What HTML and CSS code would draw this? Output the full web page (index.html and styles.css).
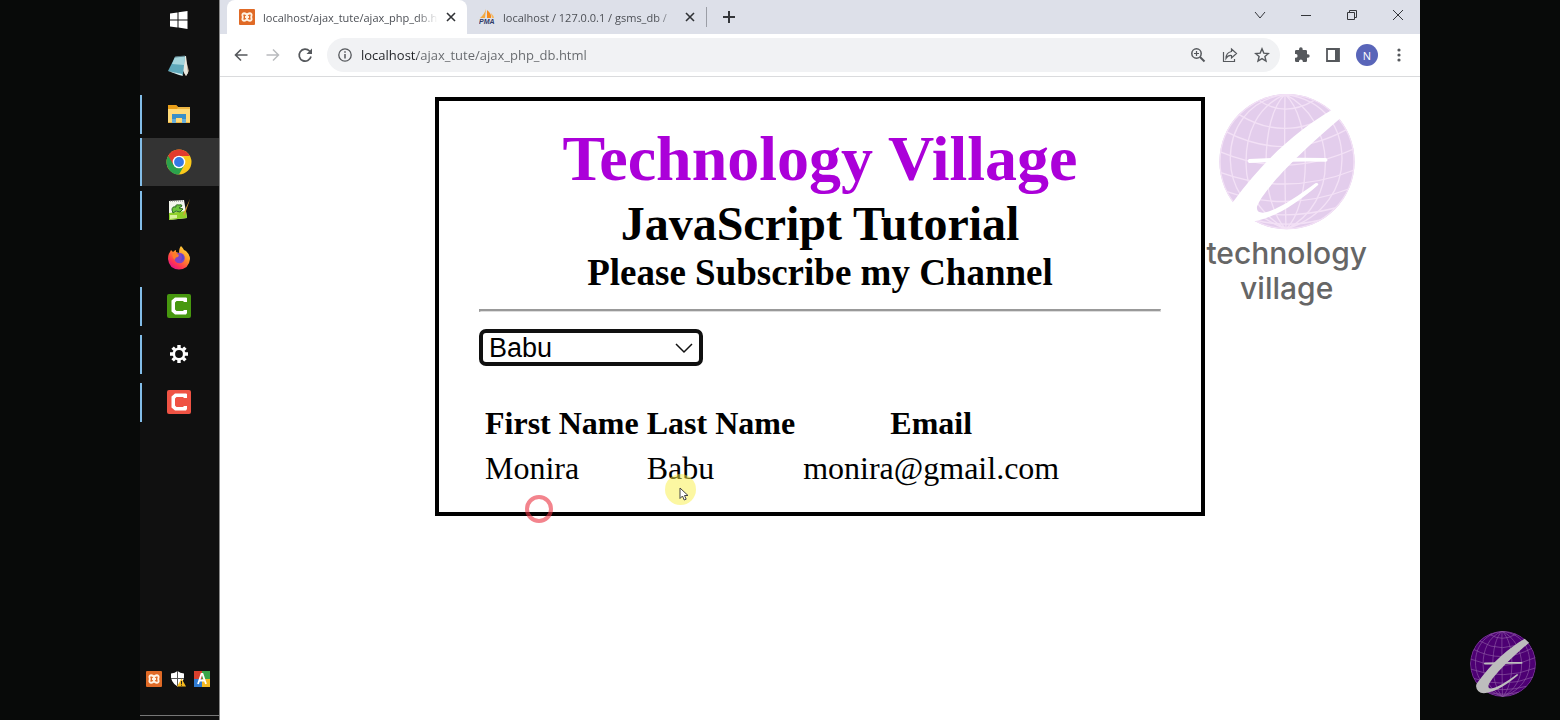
FILE: index.html
```html
<!DOCTYPE html>
<html lang="en">
<head>
<meta charset="utf-8">
<title>Technology Village</title>
<link rel="stylesheet" href="styles.css">
</head>
<body>
<svg class="defs" aria-hidden="true">
  <symbol id="globe" viewBox="60 36 420 420">
    <clipPath id="disc"><circle cx="270" cy="245" r="203"/></clipPath>
    <circle class="globe-fill" cx="270" cy="245" r="203"/>
    <g class="globe-lines" clip-path="url(#disc)">
      <circle cx="270" cy="245" r="201"/>
      <path d="M264 43C262 150 264 330 267 448M264 43C225 80 208 160 207 245S230 410 267 448M264 43C305 80 325 160 325 245S305 410 267 448M264 43C180 80 146 160 147 250S190 400 267 448M264 43C340 80 383 160 385 245S345 410 267 448M264 43C150 60 98 150 100 240S150 400 267 448M264 43C390 60 434 150 435 235S385 410 267 448"/>
      <path d="M188 63Q265 112 350 62M125 103Q265 190 412 98M87 155Q265 248 450 148M68 215Q270 300 474 205M72 278Q270 350 472 270M90 335Q270 398 455 327M130 390Q270 422 414 384M175 420Q270 445 370 420"/>
    </g>
    <path class="globe-mark" d="M404 90C310 145 205 232 108 366Q96 390 118 414Q136 432 172 424C235 412 300 370 364 314Q364 307 355 310C300 350 235 396 196 398Q178 398 180 380C195 333 310 215 431 114Z"/>
    <path class="globe-mark" d="M156 237Q270 231 387 234Q396 240 387 245Q270 243 156 249Q148 243 156 237Z"/>
  </symbol>
  <symbol id="xampp" viewBox="0 0 16 16">
    <rect width="16" height="16" rx="1" fill="#e06a26"/>
    <path d="M5 4.300Q7.300 4.300 8 6.500Q8.700 4.300 11 4.300Q13.200 4.500 12.400 7Q12 8 12.400 9Q13.200 11.500 11 11.700Q8.700 11.700 8 9.500Q7.300 11.700 5 11.700Q2.800 11.500 3.600 9Q4 8 3.600 7Q2.800 4.500 5 4.300ZM6 8h4" fill="none" stroke="#fff3e4" stroke-width="1.900"/>
  </symbol>
  <symbol id="close" viewBox="0 0 10 10"><path d="M1 1l8 8M9 1L1 9" fill="none" stroke="currentColor" stroke-width="1.600"/></symbol>
</svg>

<div class="stage">
  <nav class="taskbar" aria-label="Taskbar">
    <button class="task start" aria-label="Start"><svg width="18" height="18" viewBox="0 0 18 18" fill="#fff"><path d="M0 2.500L7.500 1.500V8.500H0ZM8.500 1.300L17.500 0V8.500H8.500ZM0 9.500h7.500v7L0 15.500ZM8.500 9.500h9V18L8.500 16.600Z"/></svg></button>
    <button class="task" aria-label="Notepad"><svg width="24" height="24" viewBox="0 0 24 24"><path d="M18 2l4 15-3 5-2-3Z" fill="#a9927a"/><path d="M8 3l11-1 2 17-2 3Z" fill="#e8e8df"/><path d="M8 3l10-1-2 19-15-4Z" fill="#5fa9bb"/><path d="M8 3l10-1-1 9-12-1Z" fill="#a5d5dc"/><path d="M1 17l14 3 1 2-4-1Z" fill="#d3eef0"/><path d="M8 3l10-1" stroke="#52727b"/></svg></button>
    <button class="task running" aria-label="File Explorer"><svg width="24" height="20" viewBox="0 0 24 20"><path d="M1 1h8l2 2h12v16H1Z" fill="#eeb643"/><path d="M1 5h22v13H1Z" fill="#ffda78"/><path d="M1 1h8l2 2-1 2H1Z" fill="#e99e18"/><path d="M5 10h14v9h-4v-5H9v5H5Z" fill="#398fc8"/><path d="M5 15h4v4H5ZM15 15h4v4h-4Z" fill="#66aeda"/></svg></button>
    <button class="task running active" aria-label="Chrome"><svg width="26" height="26" viewBox="0 0 26 26"><circle cx="13" cy="13" r="12.500" fill="#fbc91b"/><path d="M13 13L2.200 6.700A12.500 12.500 0 0 0 13 25.500L18.400 16Z" fill="#2ba24c"/><path d="M2.200 6.700A12.500 12.500 0 0 1 23.900 7H13L7.600 16Z" fill="#e33b2e"/><circle cx="13" cy="13" r="6.300" fill="#fff"/><circle cx="13" cy="13" r="4.900" fill="#3478e5"/></svg></button>
    <button class="task running" aria-label="Notepad++"><svg width="24" height="24" viewBox="0 0 24 24"><path d="M2 3l15-1 3 18-18 2Z" fill="#f4f7ee"/><path d="M2 15l17-2 1 7-18 2Z" fill="#8ed02a"/><path d="M3 17h7v3l-7 1Z" fill="#d8f29a"/><path d="M5 12q0-4 4-3q-1-3 3-2q3-1 3 1l-3 2 4 1-3 3-4-1-3 2Z" fill="#6cc43c" stroke="#2c6a22"/><path d="M3 3h13" stroke="#777" stroke-dasharray="1 1"/><path d="M23 1l-5 15-2 2 1-4Z" fill="#d9a233"/></svg></button>
    <button class="task" aria-label="Firefox"><svg width="24" height="24" viewBox="0 0 24 24"><defs><linearGradient id="fox" x1="1" y1="0" x2="0.300" y2="1"><stop offset="0" stop-color="#fff14a"/><stop offset="0.450" stop-color="#ff9425"/><stop offset="0.800" stop-color="#ff3750"/><stop offset="1" stop-color="#e31587"/></linearGradient></defs><path d="M14 0q2 2 3 4l2 1q4 4 4 8q-1 10-11 10.500Q2 23 1 13q0-5 2-7l1-2 2 2q2-2 3-2l0 2 3 1q0-5 2-7Z" fill="url(#fox)"/><circle cx="12.500" cy="12" r="5.300" fill="#8144c5"/><path d="M6 7q4 0 6 2l-1 2q-3 0-3 3Q4 11 6 7Z" fill="#ff7b28"/><path d="M14 8q3 1 3 5l-3 2 1-4Z" fill="#5948c9"/></svg></button>
    <button class="task running" aria-label="Camtasia"><svg width="24" height="24" viewBox="0 0 24 24"><rect width="24" height="24" rx="2" fill="#47980f"/><path d="M20 4v4h-3l-1-1H9.500L8 8.500v7L9.500 17H16l1-1h3v3l-1 1.500H8L4.500 17.500V6.500L8 3.500h11Z" fill="#fff"/></svg></button>
    <button class="task running" aria-label="Settings"><svg width="20" height="20" viewBox="0 0 20 20" fill="none" stroke="#fff"><circle cx="10" cy="10" r="5.200" stroke-width="2.600"/><path d="M10 4V1M10 16v3M4 10H1M16 10h3M5.800 5.800L3.600 3.600M14.200 14.200l2.200 2.200M14.200 5.800l2.200-2.200M5.800 14.200l-2.200 2.200" stroke-width="3.400"/></svg></button>
    <button class="task running" aria-label="Camtasia Recorder"><svg width="24" height="24" viewBox="0 0 24 24"><rect width="24" height="24" rx="2" fill="#ef5344"/><path d="M20 4v4h-3l-1-1H9.500L8 8.500v7L9.500 17H16l1-1h3v3l-1 1.500H8L4.500 17.500V6.500L8 3.500h11Z" fill="#fff"/></svg></button>
    <div class="tray">
      <button class="tray-icon" aria-label="XAMPP"><svg width="16" height="16"><use href="#xampp"/></svg></button>
      <button class="tray-icon" aria-label="Security"><svg width="16" height="16" viewBox="0 0 16 16"><path d="M7.500 0Q10 2 14 2.500Q15 11 7.500 15.500Q0 11 1 2.500Q5 2 7.500 0Z" fill="#fff"/><path d="M7.500 0v15M1 7.500h13" stroke="#555"/><path d="M11.500 7.500L16 15.500H7Z" fill="#f5b91d"/><path d="M11.500 10v3M11.500 13.700v1" stroke="#222"/></svg></button>
      <button class="tray-icon" aria-label="Avro Keyboard"><svg width="16" height="16" viewBox="0 0 16 16"><path d="M0 0h8v8H0Z" fill="#d9402e"/><path d="M8 0h8v8H8Z" fill="#39a548"/><path d="M0 8h8v8H0Z" fill="#2f7bd2"/><path d="M8 8h8v8H8Z" fill="#f3b922"/><path d="M4 13L7.500 3h1L12 13M5.500 9.500h5" fill="none" stroke="#fff" stroke-width="1.800"/></svg></button>
    </div>
  </nav>

  <main class="browser">
    <header class="tabstrip">
      <div class="tab current">
        <svg class="favicon" width="16" height="16"><use href="#xampp"/></svg>
        <span class="tab-title">localhost/ajax_tute/ajax_php_db.h</span>
        <button class="icon" aria-label="Close tab"><svg width="10" height="10"><use href="#close"/></svg></button>
      </div>
      <div class="tab">
        <svg class="favicon" width="16" height="16" viewBox="0 0 16 16"><path d="M7 0L6 9H1Q5 6 7 0Z" fill="#f2a944"/><path d="M8 1q5 4 4 8H8Z" fill="#f58b1c"/><path d="M12 4q3 3 3 5h-2Z" fill="#f7b75d"/><text class="pma" x="0" y="15">PMA</text></svg>
        <span class="tab-title">localhost / 127.0.0.1 / gsms_db /</span>
        <button class="icon" aria-label="Close tab"><svg width="10" height="10"><use href="#close"/></svg></button>
      </div>
      <button class="icon new-tab" aria-label="New tab"><svg width="12" height="12" viewBox="0 0 12 12"><path d="M6 0v12M0 6h12" stroke="currentColor" stroke-width="2"/></svg></button>
      <div class="window-buttons">
        <button class="icon" aria-label="Search tabs"><svg width="12" height="12" viewBox="0 0 12 12"><path d="M1 3l5 6 5-6" fill="none" stroke="currentColor"/></svg></button>
        <button class="icon" aria-label="Minimize"><svg width="12" height="12" viewBox="0 0 12 12"><path d="M1 6.500h10" stroke="currentColor"/></svg></button>
        <button class="icon" aria-label="Restore"><svg width="12" height="12" viewBox="0 0 12 12"><path d="M1.500 3.500h7v7h-7ZM3.500 3V1.500h7v7H9" fill="none" stroke="currentColor"/></svg></button>
        <button class="icon" aria-label="Close"><svg width="12" height="12" viewBox="0 0 12 12"><path d="M1 1l10 10M11 1L1 11" stroke="currentColor"/></svg></button>
      </div>
    </header>

    <div class="toolbar">
      <button class="icon" aria-label="Back"><svg width="16" height="16" viewBox="0 0 16 16"><path d="M14.500 8H2.500M8 2.500L2.500 8 8 13.500" fill="none" stroke="currentColor" stroke-width="1.600"/></svg></button>
      <button class="icon" aria-label="Forward" disabled><svg width="16" height="16" viewBox="0 0 16 16"><path d="M1.500 8h12M8 2.500l5.500 5.500L8 13.500" fill="none" stroke="currentColor" stroke-width="1.500"/></svg></button>
      <button class="icon" aria-label="Reload"><svg width="16" height="16" viewBox="0 0 16 16"><path d="M14 9.500A6 6 0 1 1 12.500 4L13.500 5" fill="none" stroke="currentColor" stroke-width="1.700"/><path d="M15 1.500v5.500H9.500Z" fill="currentColor"/></svg></button>
      <div class="omnibox">
        <svg width="14" height="14" viewBox="0 0 14 14"><circle cx="7" cy="7" r="6.200" fill="none" stroke="currentColor" stroke-width="1.300"/><path d="M7 6v4.500M7 3.300v1.500" stroke="currentColor" stroke-width="1.500"/></svg>
        <input class="url" type="text" aria-label="Address" value="localhost/ajax_tute/ajax_php_db.html">
        <button class="icon" aria-label="Zoom"><svg width="16" height="16" viewBox="0 0 16 16"><path d="M10 10l4.500 4.500" stroke="currentColor" stroke-width="2"/><circle cx="6.500" cy="6.500" r="4.700" fill="none" stroke="currentColor" stroke-width="1.500"/><path d="M4 6.500h5M6.500 4v5" stroke="currentColor" stroke-width="1.200"/></svg></button>
        <button class="icon" aria-label="Share"><svg width="16" height="16" viewBox="0 0 16 16"><path d="M1.500 5v9.500h11V12M9.500 2l5 4.500-5 4.500V8.500Q6 8 4 11.500Q4 5.500 9.500 4.500Z" fill="none" stroke="currentColor" stroke-width="1.200"/></svg></button>
        <button class="icon" aria-label="Bookmark"><svg width="16" height="16" viewBox="0 0 16 16"><path d="M8 1.800l1.800 4.300 4.600.4-3.500 3 1.100 4.600L8 11.600l-4 2.500 1.100-4.600-3.500-3 4.600-.4Z" fill="none" stroke="currentColor" stroke-width="1.400"/></svg></button>
      </div>
      <button class="icon" aria-label="Extensions"><svg width="16" height="16" viewBox="0 0 24 24"><path d="M21 11h-1.500V6.500a2 2 0 0 0-2-2H13V3a2.700 2.700 0 0 0-5.400 0v1.500H3.500a2 2 0 0 0-2 2v4H3a2.900 2.900 0 0 1 0 5.700H1.500v4.300a2 2 0 0 0 2 2h4V21a2.900 2.900 0 0 1 5.700 0v1.500h4.300a2 2 0 0 0 2-2V16H21a2.500 2.500 0 0 0 0-5Z" fill="currentColor"/></svg></button>
      <button class="icon" aria-label="Side panel"><svg width="14" height="14" viewBox="0 0 14 14"><path d="M1 1h12v12H1Z" fill="none" stroke="currentColor" stroke-width="1.800"/><path d="M9 1h4v12H9Z" fill="currentColor"/></svg></button>
      <button class="avatar" aria-label="Profile">N</button>
      <button class="icon menu" aria-label="Menu"><svg width="4" height="14" viewBox="0 0 4 14" fill="currentColor"><circle cx="2" cy="2" r="1.600"/><circle cx="2" cy="7" r="1.600"/><circle cx="2" cy="12" r="1.600"/></svg></button>
    </div>

    <section class="page">
      <div class="card">
        <h1 class="title">Technology Village</h1>
        <h2 class="subtitle">JavaScript Tutorial</h2>
        <h3 class="tagline">Please Subscribe my Channel</h3>
        <hr class="rule">
        <div class="picker">
          <select class="name-select" aria-label="Select a name"><option>Babu</option></select>
          <svg class="chevron" width="18" height="12" viewBox="0 0 18 12"><path d="M1 2l8 8 8-8" fill="none" stroke="#111" stroke-width="1.500"/></svg>
        </div>
        <table class="results">
          <thead><tr><th>First Name</th><th>Last Name</th><th>Email</th></tr></thead>
          <tbody><tr><td>Monira</td><td>Babu</td><td>monira@gmail.com</td></tr></tbody>
        </table>
        <span class="click-ring"></span>
        <span class="pointer"><svg width="10" height="14" viewBox="0 0 10 14"><path d="M1 1v10.500L3.500 9l1.700 4 2-.8L5.500 8.500H9Z" fill="#fff" stroke="#444"/></svg></span>
      </div>
      <div class="watermark">
        <svg class="globe-light" width="140" height="140"><use href="#globe"/></svg>
        <span>technology</span>
        <span>village</span>
      </div>
    </section>
  </main>
  <svg class="badge" width="68" height="68"><use href="#globe"/></svg>
</div>
</body>
</html>
```
FILE: styles.css
```css
* { box-sizing: border-box; }

body {
  margin: 0;
  background: #080a09;
  font-family: "Open Sans", "Noto Sans", sans-serif;
}

button {
  border: 0;
  padding: 0;
  background: none;
  color: inherit;
  font: inherit;
}

.defs { position: absolute; width: 0; height: 0; }

.stage {
  position: relative;
  display: flex;
  min-height: 100vh;
  padding: 0 140px;
}

/* Taskbar */
.taskbar {
  display: flex;
  flex-direction: column;
  flex: none;
  width: 80px;
  background: #101010;
  border-right: 1px solid #8a8a8a;
}

.task {
  position: relative;
  display: grid;
  place-items: center;
  height: 48px;
  padding-right: 1px;
}

.task.start { height: 42px; padding-bottom: 2px; }
.task.active { background: #333; }

.task.running::before {
  content: "";
  position: absolute;
  left: 0;
  top: 5px;
  bottom: 4px;
  width: 2px;
  background: #83bde8;
}

.task.active::before { top: 0; bottom: 0; }

.tray {
  display: flex;
  gap: 8px;
  margin-top: auto;
  margin-bottom: 4px;
  padding: 0 0 28px 6px;
  border-bottom: 1px solid #777;
}

.tray-icon { display: grid; }

/* Browser chrome */
.browser {
  display: flex;
  flex-direction: column;
  flex: 1;
  min-width: 0;
  background: #fff;
}

.icon {
  display: grid;
  place-items: center;
  flex: none;
  color: inherit;
}

.icon:disabled { color: #b9bbbe; }

.tabstrip {
  display: flex;
  align-items: center;
  height: 34px;
  background: #dde0e9;
  color: #34363a;
}

.tab {
  display: flex;
  align-items: center;
  gap: 8px;
  width: 239px;
  height: 34px;
  padding: 0 11px 0 12px;
  font-size: 11px;
  color: #4c4f55;
}

.tab.current {
  width: 240px;
  margin-left: 7px;
  background: #fff;
  border-radius: 8px 8px 0 0;
}

.tab .icon { color: #303236; }

.favicon { flex: none; }

.tab-title {
  flex: 1;
  white-space: nowrap;
  mask-image: linear-gradient(to right, #000 88%, transparent);
}

.pma {
  font: italic bold 7px "Liberation Sans", sans-serif;
  fill: #303a68;
}

.new-tab {
  height: 20px;
  padding-left: 16px;
  border-left: 1px solid #9b9ea6;
}

.window-buttons {
  display: flex;
  gap: 34px;
  margin-left: auto;
  padding: 0 16px 5px 0;
}

.toolbar {
  display: flex;
  align-items: center;
  gap: 16px;
  height: 43px;
  padding: 0 16px 0 13px;
  border-bottom: 1px solid #dadbdd;
  color: #55585c;
}

.omnibox {
  display: flex;
  align-items: center;
  flex: 1;
  gap: 16px;
  height: 34px;
  padding: 0 10px 0 11px;
  margin: 0 -2px;
  background: #f1f2f4;
  border-radius: 17px;
}

.url {
  flex: 1;
  min-width: 0;
  margin-left: -7px;
  padding: 0;
  border: 0;
  outline: 0;
  font: 13px "Open Sans", "Noto Sans", sans-serif;
  color: transparent;
  background: linear-gradient(to right, #202226 56px, #64676b 56px);
  background-clip: text;
}

.avatar {
  width: 22px;
  height: 22px;
  border-radius: 50%;
  background: #5965b9;
  color: #fff;
  font-size: 11px;
}

.menu { width: 10px; }

/* Page */
.page {
  position: relative;
  flex: 1;
  padding: 20px 0;
  color: #000;
  font-family: "Liberation Serif", serif;
  font-size: 32px;
}

.card {
  position: relative;
  width: 770px;
  max-width: 100%;
  margin: 0 auto;
  padding: 21px 40px 19px;
  border: 4px solid #000;
}

.title,
.subtitle,
.tagline {
  margin: 0;
  text-align: center;
}

.title { font-size: 64px; color: #ab00d9; }
.subtitle { font-size: 48px; }
.tagline { font-size: 37px; }

.rule {
  margin: 15px 0 17px;
  border: solid #999;
  border-width: 2px 1px 1px 2px;
  border-right-color: #ddd;
  border-bottom-color: #ddd;
}

.picker {
  display: grid;
  align-items: center;
  width: 224px;
  margin-bottom: 33px;
}

.name-select,
.chevron { grid-area: 1 / 1; }

.name-select {
  appearance: none;
  height: 37px;
  padding: 0 6px;
  border: 4px solid #101010;
  border-radius: 7px;
  background: #fff;
  color: #000;
  font: 27px "Liberation Sans", sans-serif;
}

.chevron {
  justify-self: end;
  margin-right: 10px;
  pointer-events: none;
}

.results { border-spacing: 4px; }

.results th,
.results td { padding: 2px; }

.click-ring {
  position: absolute;
  left: 86px;
  top: 394px;
  width: 28px;
  height: 28px;
  border: 4px solid rgba(235, 50, 65, 0.6);
  border-radius: 50%;
}

.pointer {
  position: absolute;
  left: 226px;
  top: 373px;
  display: grid;
  width: 31px;
  height: 31px;
  padding: 13px 0 0 14px;
  border-radius: 50%;
  background: rgba(250, 240, 70, 0.5);
}

/* Channel branding */
.watermark {
  position: absolute;
  top: 15px;
  right: 53px;
  display: flex;
  flex-direction: column;
  align-items: center;
  font: 500 30px/35px Inter, sans-serif;
  color: #666;
}

.globe-light {
  --fill: #e3cdec;
  --lines: #f3e1f6;
  --mark: #fff;
  margin-bottom: 4px;
}

.badge {
  --fill: #4d0073;
  --lines: #8f5ca5;
  --mark: #bdbdbd;
  position: absolute;
  right: 23px;
  bottom: 22px;
}

.globe-fill { fill: var(--fill); }
.globe-lines { fill: none; stroke: var(--lines); stroke-width: 4; }
.globe-mark { fill: var(--mark); }
```
